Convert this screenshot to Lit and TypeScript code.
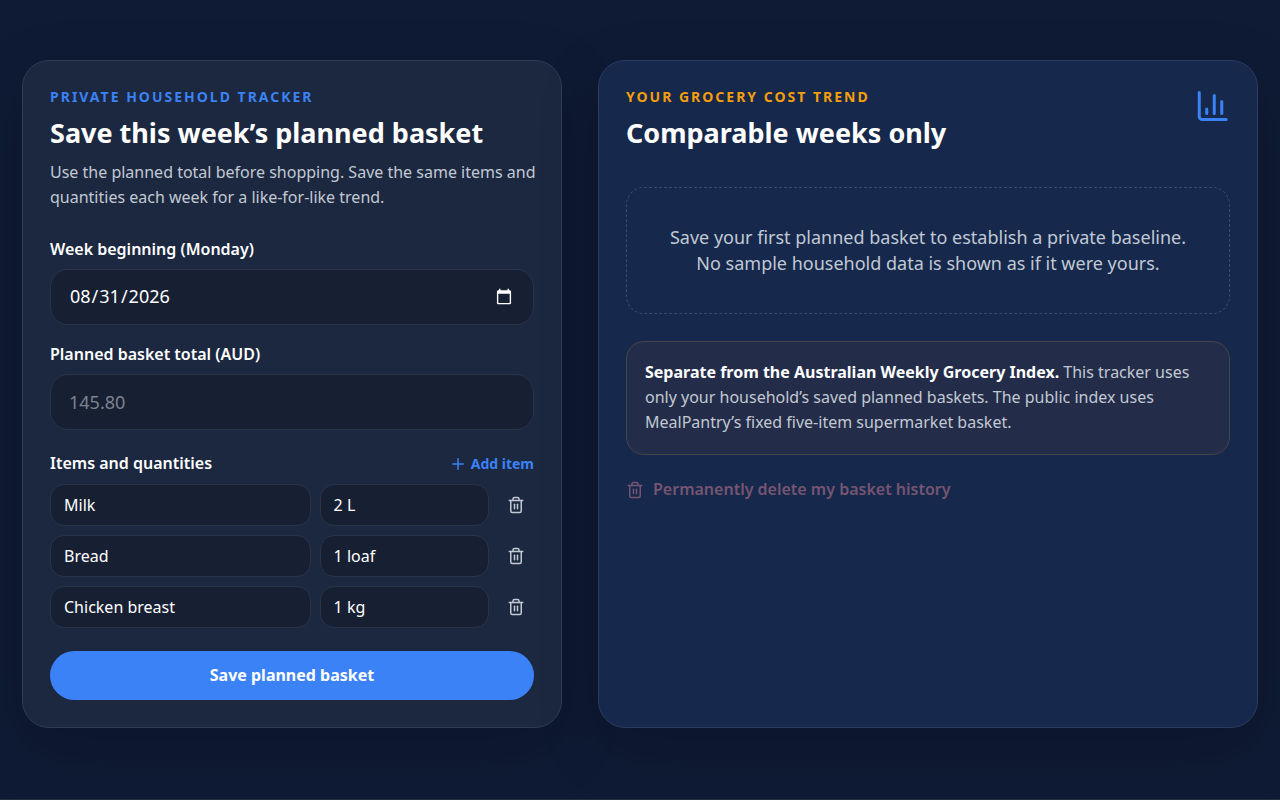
import { LitElement, html, css, svg } from "lit";
import { customElement, state } from "lit/decorators.js";

interface BasketItem {
  name: string;
  quantity: string;
}

const trashIcon = html`<svg class="icon" viewBox="0 0 24 24" aria-hidden="true">
  ${svg`<path d="M3 6h18"/><path d="M19 6v14a2 2 0 0 1-2 2H7a2 2 0 0 1-2-2V6"/><path d="M8 6V4a2 2 0 0 1 2-2h4a2 2 0 0 1 2 2v2"/><path d="M10 11v6"/><path d="M14 11v6"/>`}
</svg>`;

const plusIcon = html`<svg class="icon" viewBox="0 0 24 24" aria-hidden="true">
  <path d="M5 12h14" /><path d="M12 5v14" />
</svg>`;

const chartIcon = html`<svg class="icon icon-chart" viewBox="0 0 24 24" aria-hidden="true">
  <path d="M3.5 3v16a2 2 0 0 0 2 2h16" /><path d="M18.5 17V9" /><path d="M13.5 17V5" /><path d="M8.5 17v-3" />
</svg>`;

@customElement("app-root")
export class AppRoot extends LitElement {
  static styles = css`
    :host {
      display: block;
      color: #fff;
      font-family: "Noto Sans", sans-serif;
      font-size: 16px;
      line-height: 25px;
      color-scheme: dark;
    }
    *,
    *::before,
    *::after {
      box-sizing: border-box;
    }
    h2,
    p {
      margin: 0;
    }
    input,
    button {
      font: inherit;
      color: inherit;
      margin: 0;
    }
    button {
      border: 0;
      padding: 0;
      background: none;
      cursor: pointer;
    }
    .page {
      min-height: 100vh;
      padding: 60px 22px 71px;
      background: #0f1b35;
      border-bottom: 1px solid #272f42;
    }
    .columns {
      display: grid;
      grid-template-columns: 9fr 11fr;
      gap: 36px;
      max-width: 1296px;
      margin: 0 auto;
    }
    .card {
      min-width: 0;
      padding: 27px;
      border: 1px solid #303c53;
      border-radius: 27px;
      background: #1c283f;
      box-shadow: 0 20px 60px rgba(0, 0, 0, 0.22);
    }
    .card-trend {
      background: #16284b;
      border-color: #2b3c5d;
    }
    .eyebrow {
      font-size: 14px;
      line-height: 18px;
      font-weight: 700;
      letter-spacing: 2px;
      text-transform: uppercase;
      color: #3b82f6;
    }
    .eyebrow-amber {
      color: #f59e0b;
    }
    .title {
      margin-top: 10px;
      font-size: 27px;
      line-height: 34px;
      font-weight: 700;
    }
    .intro {
      margin: 10px -9px 0 0;
      color: #c2c9d4;
    }
    .form {
      display: flex;
      flex-direction: column;
      margin-top: 27px;
    }
    .field {
      display: flex;
      flex-direction: column;
      gap: 7px;
      margin-bottom: 17px;
    }
    .label {
      font-weight: 600;
    }
    .input {
      width: 100%;
      min-width: 0;
      border: 1px solid #2a3448;
      background: #171f33;
    }
    .input::placeholder {
      color: #7d828d;
      opacity: 1;
    }
    .input-large {
      height: 56px;
      padding: 0 18px 1px;
      border-radius: 18px;
      font-size: 18px;
    }
    .input-small {
      height: 42px;
      padding: 0 13px;
      border-radius: 14px;
    }
    .items-head {
      display: flex;
      justify-content: space-between;
      align-items: center;
      margin-top: 4px;
    }
    .add {
      display: inline-flex;
      align-items: center;
      gap: 4px;
      font-size: 14px;
      font-weight: 700;
      color: #3b82f6;
    }
    .items {
      display: grid;
      gap: 9px;
      margin-top: 8px;
    }
    .row {
      display: grid;
      grid-template-columns: 20fr 13fr 36px;
      gap: 9px;
    }
    .remove {
      display: grid;
      place-items: center;
      color: #c2c9d4;
    }
    .save {
      height: 49px;
      margin-top: 23px;
      border-radius: 25px;
      background: #3b82f6;
      font-weight: 700;
    }
    .icon {
      width: 18px;
      height: 18px;
      flex: none;
      fill: none;
      stroke: currentColor;
      stroke-width: 2;
      stroke-linecap: round;
      stroke-linejoin: round;
    }
    .icon-chart {
      width: 36px;
      height: 36px;
      color: #3b82f6;
    }
    .trend-head {
      display: flex;
      justify-content: space-between;
      align-items: flex-start;
      gap: 18px;
    }
    .empty {
      margin-top: 37px;
      padding: 36px 36px 37px;
      border: 1px dashed #3a4a69;
      border-radius: 18px;
      font-size: 18px;
      line-height: 26px;
      text-align: center;
      color: #c1c8d5;
    }
    .note {
      margin-top: 27px;
      padding: 18px 18px 19px;
      border: 1px solid #454649;
      border-radius: 18px;
      background: #232d49;
      color: #c2c8d3;
    }
    .note strong {
      color: #fff;
      font-weight: 700;
    }
    .delete {
      display: inline-flex;
      align-items: center;
      gap: 9px;
      margin-top: 22px;
      font-weight: 600;
      color: #755572;
    }
  `;

  @state() private items: BasketItem[] = [
    { name: "Milk", quantity: "2 L" },
    { name: "Bread", quantity: "1 loaf" },
    { name: "Chicken breast", quantity: "1 kg" },
  ];

  private addItem() {
    this.items = [...this.items, { name: "", quantity: "" }];
  }

  private removeItem(index: number) {
    this.items = this.items.filter((_, i) => i !== index);
  }

  render() {
    return html`
      <main class="page">
        <div class="columns">
          <section class="card">
            <p class="eyebrow">Private household tracker</p>
            <h2 class="title">Save this week’s planned basket</h2>
            <p class="intro">
              Use the planned total before shopping. Save the same items and quantities each week for a
              like-for-like trend.
            </p>
            <form class="form" @submit=${(e: Event) => e.preventDefault()}>
              <div class="field">
                <label class="label" for="week">Week beginning (Monday)</label>
                <input class="input input-large" id="week" type="date" value="2026-08-31" />
              </div>
              <div class="field">
                <label class="label" for="total">Planned basket total (AUD)</label>
                <input class="input input-large" id="total" inputmode="decimal" placeholder="145.80" />
              </div>
              <div class="items-head">
                <span class="label">Items and quantities</span>
                <button class="add" type="button" @click=${this.addItem}>${plusIcon}Add item</button>
              </div>
              <div class="items">
                ${this.items.map(
                  (item, i) => html`
                    <div class="row">
                      <input class="input input-small" aria-label="Item ${i + 1}" .value=${item.name} />
                      <input class="input input-small" aria-label="Quantity ${i + 1}" .value=${item.quantity} />
                      <button
                        class="remove"
                        type="button"
                        aria-label="Remove item ${i + 1}"
                        @click=${() => this.removeItem(i)}
                      >
                        ${trashIcon}
                      </button>
                    </div>
                  `
                )}
              </div>
              <button class="save" type="submit">Save planned basket</button>
            </form>
          </section>
          <section class="card card-trend">
            <div class="trend-head">
              <div>
                <p class="eyebrow eyebrow-amber">Your grocery cost trend</p>
                <h2 class="title">Comparable weeks only</h2>
              </div>
              ${chartIcon}
            </div>
            <p class="empty">
              Save your first planned basket to establish a private baseline. No sample household data is shown
              as if it were yours.
            </p>
            <p class="note">
              <strong>Separate from the Australian Weekly Grocery Index.</strong> This tracker uses only your
              household’s saved planned baskets. The public index uses MealPantry’s fixed five-item supermarket
              basket.
            </p>
            <button class="delete" type="button">${trashIcon}Permanently delete my basket history</button>
          </section>
        </div>
      </main>
    `;
  }
}
